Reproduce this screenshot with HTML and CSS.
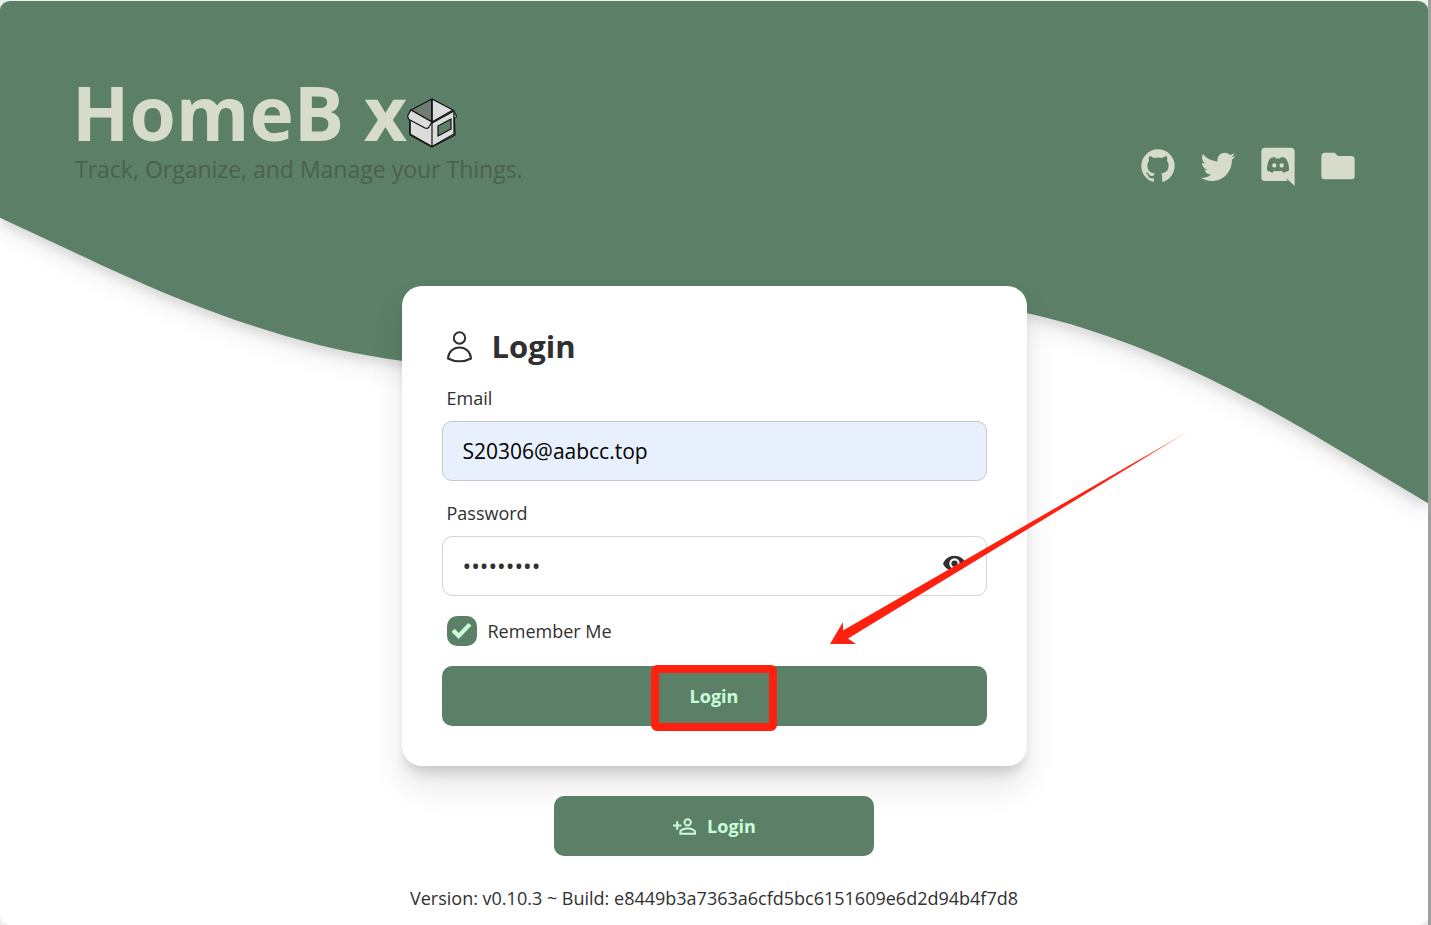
FILE: index.html
```html
<!DOCTYPE html>
<html lang="en">
<head>
    <meta charset="UTF-8">
    <meta name="viewport" content="width=device-width, initial-scale=1.0">
    <title>HomeBox</title>
    <link rel="stylesheet" href="styles.css">
</head>
<body>
    <div class="page">
        <div class="wave">
            <div class="wave-top"></div>
            <svg viewBox="0 0 1440 320" aria-hidden="true">
                <path d="M0,32L80,69.3C160,107,320,181,480,181.3C640,181,800,107,960,117.3C1120,128,1280,224,1360,272L1440,320L1440,-2L0,-2Z"/>
            </svg>
        </div>
        <header class="header">
            <div>
                <h1 class="title">HomeB x<svg class="box-logo" viewBox="0 0 50 50" aria-hidden="true">
                    <path fill="#dcdcdc" d="M3 13L25 25L47 13L48 37L25 49L3 37Z"/>
                    <path fill="#727d72" d="M25 1L4 12L25 24Z"/>
                    <path fill="#dcdcdc" d="M25 1L46 12L25 24Z"/>
                    <path fill="#dcdcdc" d="M46 12L49 17C50 19 49 20 47 20"/>
                    <path fill="#dcdcdc" d="M4 12L1 17Q0 20 3 22L18 30Q21 31 22 29L25 24Z"/>
                    <path fill="#5c8067" d="M31 28L44 21V31L31 38Z"/>
                    <path d="M3 22V36L25 48.500L47 36V14M25 1V48"/>
                </svg></h1>
                <p class="tagline">Track, Organize, and Manage your Things.</p>
            </div>
            <nav class="social">
                <a href="#" aria-label="GitHub">
                    <svg viewBox="0 0 24 24"><path d="M12 2A10 10 0 0 0 2 12c0 4.42 2.87 8.17 6.84 9.5c.5.08.66-.23.66-.5v-1.69c-2.77.6-3.36-1.34-3.36-1.34c-.46-1.16-1.11-1.47-1.11-1.47c-.91-.62.07-.6.07-.6c1 .07 1.53 1.03 1.53 1.03c.87 1.52 2.34 1.07 2.91.83c.09-.65.35-1.09.63-1.34c-2.22-.25-4.55-1.11-4.55-4.92c0-1.11.38-2 1.03-2.71c-.1-.25-.45-1.29.1-2.64c0 0 .84-.27 2.75 1.02c.79-.22 1.65-.33 2.5-.33s1.71.11 2.5.33c1.91-1.29 2.75-1.02 2.75-1.02c.55 1.35.2 2.39.1 2.64c.65.71 1.03 1.6 1.03 2.71c0 3.82-2.34 4.66-4.57 4.91c.36.31.69.92.69 1.85V21c0 .27.16.59.67.5C19.14 20.16 22 16.42 22 12A10 10 0 0 0 12 2"/></svg>
                </a>
                <a href="#" aria-label="Twitter">
                    <svg viewBox="0 0 24 24"><path d="M22.46 6c-.77.35-1.6.58-2.46.69c.88-.53 1.56-1.37 1.88-2.38c-.83.5-1.75.85-2.72 1.05C18.37 4.5 17.26 4 16 4c-2.35 0-4.27 1.92-4.27 4.29c0 .34.04.67.11.98C8.28 9.09 5.11 7.38 3 4.79c-.37.63-.58 1.37-.58 2.15c0 1.49.75 2.81 1.91 3.56c-.71 0-1.37-.2-1.95-.5v.03c0 2.08 1.48 3.82 3.44 4.21a4.22 4.22 0 0 1-1.93.07a4.28 4.28 0 0 0 4 2.98a8.521 8.521 0 0 1-5.33 1.84c-.34 0-.68-.02-1.02-.06C3.44 20.29 5.7 21 8.12 21C16 21 20.33 14.46 20.33 8.79c0-.19 0-.37-.01-.56c.84-.6 1.56-1.36 2.14-2.23"/></svg>
                </a>
                <a href="#" aria-label="Discord">
                    <svg viewBox="0 0 24 24">
                        <path d="M22 24L17 19.300L17.600 21H4.300A2.300 2.300 0 0 1 2 18.700V3.300A2.300 2.300 0 0 1 4.300 1H19.700A2.300 2.300 0 0 1 22 3.300Z"/>
                        <path class="face" d="M10.200 6.600C9 6.800 8 7.100 7.200 7.500C5.900 9.600 5.300 11.900 5.400 14.500C6.300 15.200 7.500 15.700 8.800 16L9.600 14.900C11.200 15.300 12.800 15.300 14.400 14.900L15.200 16C16.500 15.700 17.700 15.200 18.600 14.500C18.700 11.900 18.100 9.600 16.800 7.500C16 7.100 15 6.800 13.800 6.600L13.300 7.500C12.400 7.400 11.600 7.400 10.700 7.500Z"/>
                        <circle cx="9.800" cy="11.700" r="1.300"/>
                        <circle cx="14.200" cy="11.700" r="1.300"/>
                    </svg>
                </a>
                <a href="#" aria-label="Docs">
                    <svg viewBox="0 0 24 24"><path d="M10 4H4c-1.110 0-2 .89-2 2v12a2 2 0 0 0 2 2h16a2 2 0 0 0 2-2V8c0-1.110-.9-2-2-2h-8z"/></svg>
                </a>
            </nav>
        </header>
        <main class="main">
            <form class="card">
                <h2 class="card-title">
                    <svg viewBox="0 0 35 35" aria-hidden="true">
                        <circle cx="17.500" cy="9" r="5.700"/>
                        <path d="M6 29.500C6.500 23 11 18.500 17.500 18.500S28.500 23 29 29.500C22 33.300 13 33.300 6 29.500Z"/>
                    </svg>
                    Login
                </h2>
                <div class="field">
                    <label for="email">Email</label>
                    <input class="autofilled" id="email" type="text" value="S20306@aabcc.top">
                </div>
                <div class="field">
                    <label for="password">Password</label>
                    <div class="password">
                        <input id="password" type="password" value="password1">
                        <button class="eye" type="button" aria-label="Show password">
                            <svg viewBox="0 0 24 24"><path d="M12 9a3 3 0 0 0-3 3a3 3 0 0 0 3 3a3 3 0 0 0 3-3a3 3 0 0 0-3-3m0 8a5 5 0 0 1-5-5a5 5 0 0 1 5-5a5 5 0 0 1 5 5a5 5 0 0 1-5 5m0-12.500C7 4.500 2.730 7.610 1 12c1.730 4.390 6 7.500 11 7.500s9.270-3.110 11-7.500c-1.730-4.390-6-7.500-11-7.500"/></svg>
                        </button>
                    </div>
                </div>
                <label class="remember"><input type="checkbox" checked> Remember Me</label>
                <button class="btn" type="submit">Login<span class="highlight"></span></button>
                <svg class="arrow" viewBox="0 0 360 214" aria-hidden="true">
                    <defs>
                        <linearGradient id="fade" x1="0" y1="1" x2="1" y2="0">
                            <stop offset="0.850" stop-color="#ff2010"/>
                            <stop offset="1" stop-color="#ffb060"/>
                        </linearGradient>
                    </defs>
                    <path fill="url(#fade)" d="M0 213L13 191V199.500L359 0L18 207.500L26 213Z"/>
                </svg>
            </form>
            <button class="btn register" type="button">
                <svg viewBox="0 0 24 24" aria-hidden="true"><path d="M15 4a4 4 0 1 0 0 8a4 4 0 0 0 0-8m0 1.900a2.100 2.100 0 1 1 0 4.200a2.100 2.100 0 0 1 0-4.200M4 7v3H1v2h3v3h2v-3h3v-2H6V7zm11 6c-2.670 0-8 1.330-8 4v3h16v-3c0-2.670-5.330-4-8-4m0 1.900c2.970 0 6.100 1.460 6.100 2.100v1.100H8.900V17c0-.640 3.100-2.100 6.100-2.100"/></svg>
                Login
            </button>
        </main>
        <footer class="footer">Version: v0.10.3 ~ Build: e8449b3a7363a6cfd5bc6151609e6d2d94b4f7d8</footer>
    </div>
</body>
</html>
```

FILE: styles.css
```css
* {
    box-sizing: border-box;
    margin: 0;
    padding: 0;
}

body {
    background: linear-gradient(to left, #a0a0a0 3px, #eeeeee 3px);
    font-family: "Open Sans", "Noto Sans", sans-serif;
    font-size: 18px;
    line-height: 24px;
    color: #303030;
}

button,
input {
    font: inherit;
}

.page {
    position: relative;
    display: flex;
    flex-direction: column;
    min-height: 100vh;
    margin-right: 3px;
    border-top: 1px solid #eeeeee;
    border-radius: 10px;
    background: white;
    overflow: hidden;
}

/* green background behind the header */
.wave {
    position: absolute;
    top: 0;
    left: 0;
    width: 100%;
    filter: drop-shadow(0 14px 10px rgba(0, 0, 0, 0.05)) drop-shadow(0 6px 5px rgba(0, 0, 0, 0.1));
}

.wave-top {
    height: 185px;
    background: #5c8067;
}

.wave svg {
    display: block;
    width: 100%;
    overflow: visible;
    fill: #5c8067;
}

.header {
    position: relative;
    display: flex;
    justify-content: space-between;
    align-items: flex-end;
    padding: 71px 70px 0 72px;
}

.title {
    display: flex;
    align-items: center;
    font-size: 75px;
    line-height: 80px;
    color: #d7dbcb;
    white-space: pre;
}

.box-logo {
    width: 50px;
    height: 50px;
    margin-top: 22px;
    fill: none;
    stroke: #111111;
    stroke-width: 1.2;
    stroke-linejoin: round;
    overflow: visible;
}

.tagline {
    padding-left: 3px;
    font-size: 23px;
    line-height: 34px;
    color: #4b604f;
}

.social {
    display: flex;
    gap: 20px;
}

.social svg {
    display: block;
    width: 40px;
    height: 40px;
    fill: #d7dbcb;
}

.social .face {
    fill: #5c8067;
}

.main {
    position: relative;
    display: flex;
    flex-direction: column;
    align-items: center;
    gap: 30px;
    margin-top: 100px;
}

.card {
    position: relative;
    width: 100%;
    max-width: 625px;
    padding: 40px;
    border-radius: 20px;
    background: white;
    box-shadow: 0 20px 32px rgba(0, 0, 0, 0.1), 0 10px 12px -4px rgba(0, 0, 0, 0.14);
}

.card-title {
    display: flex;
    align-items: center;
    gap: 15px;
    font-size: 31px;
    line-height: 40px;
}

.card-title svg {
    width: 35px;
    height: 35px;
    fill: none;
    stroke: #303030;
    stroke-width: 2;
}

.field {
    margin-top: 10px;
}

.field label {
    display: block;
    padding: 10px 5px;
    line-height: 25px;
}

.field input {
    display: block;
    width: 100%;
    height: 60px;
    padding: 0 20px;
    border: 1px solid #d6d6d6;
    border-radius: 10px;
    background: white;
    font-size: 23px;
    color: #303030;
}

.field .autofilled {
    border-color: #c1c7d4;
    background: #e8f0fe;
    font-size: 21px;
    color: black;
}

.password {
    position: relative;
}

.eye {
    position: absolute;
    top: 15px;
    right: 20px;
    border: none;
    background: none;
}

.eye svg {
    display: block;
    width: 25px;
    height: 25px;
    fill: #303030;
}

.remember {
    display: flex;
    align-items: center;
    gap: 11px;
    margin: 20px 0;
    padding-left: 5px;
}

.remember input {
    display: grid;
    place-content: center;
    width: 30px;
    height: 30px;
    border-radius: 10px;
    background: #5c8067;
    appearance: none;
}

.remember input:checked::before {
    content: "";
    width: 20px;
    height: 16px;
    background: #c9fdd7;
    clip-path: polygon(0 54%, 16% 36%, 36% 62%, 84% 0, 100% 16%, 36% 100%);
}

.btn {
    position: relative;
    display: flex;
    justify-content: center;
    align-items: center;
    gap: 10px;
    width: 100%;
    height: 60px;
    border: none;
    border-radius: 10px;
    background: #5c8067;
    color: #c9fdd7;
    font-weight: bold;
}

.highlight {
    position: absolute;
    top: -1px;
    left: 50%;
    width: 126px;
    height: 66px;
    border: 8px solid #ff2010;
    border-radius: 6px;
    transform: translateX(-50%);
}

.arrow {
    position: absolute;
    top: 145px;
    left: 428px;
    width: 360px;
    pointer-events: none;
}

.register {
    max-width: 320px;
}

.register svg {
    width: 25px;
    height: 25px;
    fill: #c9fdd7;
}

.footer {
    margin-top: 30px;
    text-align: center;
}
```
